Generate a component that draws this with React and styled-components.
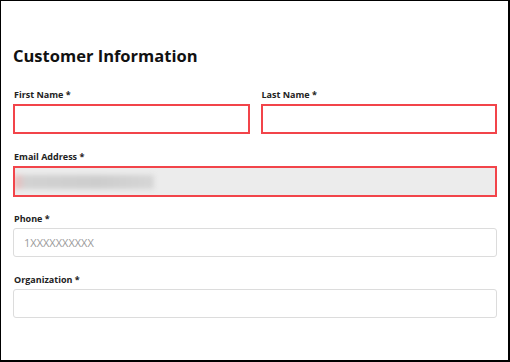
import styled, { createGlobalStyle } from "styled-components";

const GlobalStyle = createGlobalStyle`
  * { box-sizing: border-box; }
  body {
    margin: 0;
    background: #ffffff;
    font-family: "Open Sans", "Noto Sans", sans-serif;
  }
`;

const Frame = styled.div`
  width: 510px;
  height: 362px;
  border: 1px solid #000;
  border-right-width: 2px;
  border-bottom-width: 2px;
  background: #fff;
  padding: 43px 11px 0 12px;
`;

const Title = styled.h2`
  margin: 0 0 20px 0;
  font-size: 16.5px;
  line-height: 24px;
  font-weight: 700;
  color: #111;
`;

const Row = styled.div`
  display: grid;
  grid-template-columns: 1fr 1fr;
  column-gap: 11px;
`;

const Field = styled.div`
  display: flex;
  flex-direction: column;
  gap: 3px;
  margin-bottom: ${(p) => p.space || "16px"};
`;

const Label = styled.label`
  font-size: 9px;
  line-height: 13px;
  font-weight: 700;
  color: #222;
  padding-left: 1px;
`;

const Input = styled.input`
  height: ${(p) => (p.error ? "30px" : "29px")};
  width: 100%;
  border: ${(p) => (p.error ? "2px solid #f2444a" : "1px solid #dcdcdc")};
  border-radius: ${(p) => (p.error ? "0" : "3px")};
  background: #fff;
  padding: 0 10px;
  font-family: inherit;
  font-size: 11px;
  color: #333;
  outline: none;
  &::placeholder {
    color: #9a9a9a;
  }
`;

const LockedBox = styled.div`
  height: 31px;
  border: 2px solid #f2444a;
  background: #ececec;
  display: flex;
  align-items: center;
  overflow: hidden;
`;

const BlurredText = styled.div`
  width: 140px;
  height: 14px;
  margin-left: -1px;
  background: linear-gradient(to right, #f2b8b8, #d2d2d2 8%, #cdcdcd 60%, #d6d6d6);
  filter: blur(2.5px);
`;

export default function App() {
  return (
    <>
      <GlobalStyle />
      <Frame>
        <Title>Customer Information</Title>
        <Row>
          <Field>
            <Label>First Name *</Label>
            <Input error />
          </Field>
          <Field>
            <Label>Last Name *</Label>
            <Input error />
          </Field>
        </Row>
        <Field space="15px">
          <Label>Email Address *</Label>
          <LockedBox>
            <BlurredText />
          </LockedBox>
        </Field>
        <Field>
          <Label>Phone *</Label>
          <Input placeholder="1XXXXXXXXXX" />
        </Field>
        <Field>
          <Label>Organization *</Label>
          <Input />
        </Field>
      </Frame>
    </>
  );
}
